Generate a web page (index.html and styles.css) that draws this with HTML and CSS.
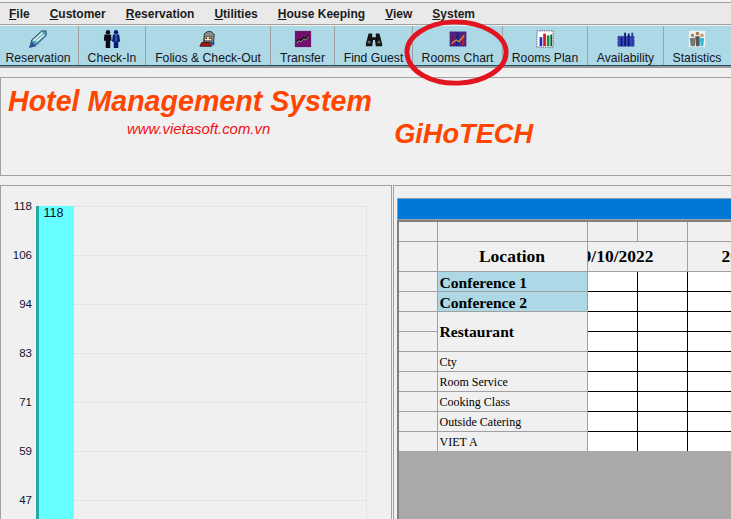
FILE: index.html
```html
<!DOCTYPE html>
<html lang="en">
<head>
<meta charset="utf-8">
<title>Hotel Management System</title>
<link rel="stylesheet" href="styles.css">
</head>
<body>
<div class="app">
  <nav class="menu">
    <span class="mi"><u>F</u>ile</span>
    <span class="mi"><u>C</u>ustomer</span>
    <span class="mi"><u>R</u>eservation</span>
    <span class="mi"><u>U</u>tilities</span>
    <span class="mi"><u>H</u>ouse Keeping</span>
    <span class="mi"><u>V</u>iew</span>
    <span class="mi"><u>S</u>ystem</span>
  </nav>
  <div class="toolbar">
    <div class="tb w78"><svg class="ic" viewBox="0 0 20 20"><path d="M1 19 L3 11 L14 1 L19 1 L19 6 L9 16 Z" fill="#4f9fb4" stroke="#1f4a78"/><path d="M5 12 L15 3 M8 13 L17 5" stroke="#e8f4f4" stroke-width="1.800"/><path d="M0 20 L8 18 L3 13 Z" fill="#2f4f96"/></svg><span>Reservation</span></div>
    <div class="tb w66"><svg class="ic" viewBox="0 0 20 20"><circle cx="5.500" cy="2.500" r="2.500" fill="#0b0b18"/><path d="M1.500 5 H9 L9.500 12 H8 V20 H3 V12 H1 Z" fill="#0b0b18"/><circle cx="14.500" cy="2.500" r="2.500" fill="#0a1c78"/><path d="M11 5 H18 L19 13 H17 L17 20 H12 L12 13 H10 Z" fill="#0a1c78"/><path d="M14.500 5 V13" stroke="#4fa0d8"/></svg><span>Check-In</span></div>
    <div class="tb w124"><svg class="ic" viewBox="0 0 20 20"><path d="M5 13 L6 4 Q10 0 14 2 L17 5 L16 14 Z" fill="#8a8a8a" stroke="#333"/><rect x="6" y="7" width="8" height="5" fill="#f4e4b0" stroke="#222" stroke-width=".6"/><circle cx="8" cy="9" r="1" fill="#111"/><circle cx="12" cy="9" r="1" fill="#111"/><path d="M1 18 L3 14 H12 L14 18 Z" fill="#b01818" stroke="#311"/><path d="M13 13 H17 V17 H14 Z" fill="#2c4a9a"/></svg><span>Folios &amp; Check-Out</span></div>
    <div class="tb w63"><svg class="ic" viewBox="0 0 20 20"><rect x="1" y="1" width="18" height="18" fill="#72106e"/><path d="M3 13 L6 11 L8 12 L11 9 L13 10 L17 6" stroke="#111" stroke-width="2.400" fill="none"/><path d="M3 14 L6 12 L8 13 L11 10 L13 11 L17 7" stroke="#ddd" stroke-width=".8" fill="none"/></svg><span>Transfer</span></div>
    <div class="tb w77"><svg class="ic" viewBox="0 0 20 20"><path d="M4 4 H8 V8 H12 V4 H16 L19 15 V18 H12 L11 11 H9 L8 18 H1 V15 Z" fill="#141414"/><rect x="3" y="12" width="3" height="3" fill="#666"/><rect x="14" y="12" width="3" height="3" fill="#666"/></svg><span>Find Guest</span></div>
    <div class="tb w90"><svg class="ic" viewBox="0 0 20 20"><rect x="1" y="2" width="18" height="16" fill="#5a2080" stroke="#18248a" stroke-dasharray="1 1"/><rect x="3" y="5" width="3" height="12" fill="#701858"/><rect x="8" y="3" width="3" height="14" fill="#18248a"/><rect x="14" y="6" width="3" height="11" fill="#a02040"/><path d="M3 15 L8 11 L11 13 L17 6" stroke="#e8a030" stroke-width="1.200" fill="none"/></svg><span>Rooms Chart</span></div>
    <div class="tb w85"><svg class="ic" viewBox="0 0 20 20"><rect x="1" y="1" width="18" height="18" fill="#fff" stroke="#334" stroke-dasharray="1 1"/><rect x="4" y="8" width="3" height="10" fill="#2828c8"/><rect x="8" y="4" width="3" height="14" fill="#d81828"/><rect x="12" y="6" width="3" height="12" fill="#109040"/><rect x="16" y="5" width="2" height="13" fill="#0a5a30"/></svg><span>Rooms Plan</span></div>
    <div class="tb w76"><svg class="ic" viewBox="0 0 20 20"><rect x="1" y="7" width="18" height="11" fill="#3a48c0" stroke="#18208a" stroke-dasharray="1 1"/><rect x="4" y="8" width="2" height="10" fill="#10186a"/><rect x="8" y="3" width="2" height="15" fill="#10186a"/><rect x="12" y="4" width="2" height="14" fill="#10186a"/><rect x="16" y="3" width="2" height="15" fill="#2a38b0"/></svg><span>Availability</span></div>
    <div class="tb w67"><svg class="ic" viewBox="0 0 20 20"><rect x="1" y="1" width="18" height="18" fill="#f4f4f4"/><circle cx="5" cy="6" r="2" fill="#b08868"/><path d="M2 9 H8 V18 H3 Z" fill="#777"/><circle cx="10.500" cy="4" r="2" fill="#a07858"/><path d="M8 7 H13 V18 H9 Z" fill="#555"/><circle cx="15.500" cy="6" r="2" fill="#c09878"/><path d="M13 9 H18 L17 18 H14 Z" fill="#38b8d8"/></svg><span>Statistics</span></div>
  </div>
  <div class="gap"></div>
  <header class="banner">
    <h1 class="title">Hotel Management System</h1>
    <div class="banner-row">
      <a class="site">www.vietasoft.com.vn</a>
      <strong class="brand">GiHoTECH</strong>
    </div>
  </header>
  <div class="split">
    <section class="chart-panel">
      <div class="chart">
        <div class="gl"><span class="yl">118</span><i></i></div>
        <div class="gl"><span class="yl">106</span><i></i></div>
        <div class="gl"><span class="yl">94</span><i></i></div>
        <div class="gl"><span class="yl">83</span><i></i></div>
        <div class="gl"><span class="yl">71</span><i></i></div>
        <div class="gl"><span class="yl">59</span><i></i></div>
        <div class="gl"><span class="yl">47</span><i></i></div>
        <div class="bar">118</div>
      </div>
    </section>
    <section class="grid-panel">
      <div class="bluebar"></div>
      <div class="sheet">
        <table class="tbl">
          <colgroup><col class="c1"><col class="c2"><col class="c3"><col class="c3"><col class="c3"><col class="c3"></colgroup>
          <tr class="r19 head"><td></td><td></td><td></td><td></td><td></td><td></td></tr>
          <tr class="r30 head"><td></td><td class="loc">Location</td><td colspan="2"><div class="date d1"><span>19/10/2022</span></div></td><td colspan="2"><div class="date d2"><span>20/10/2022</span></div></td></tr>
          <tr class="r20"><td class="hd"></td><td class="hd blue">Conference 1</td><td></td><td></td><td></td><td></td></tr>
          <tr class="r20"><td class="hd"></td><td class="hd blue">Conference 2</td><td></td><td></td><td></td><td></td></tr>
          <tr class="r20"><td class="hd"></td><td class="hd big" rowspan="2">Restaurant</td><td></td><td></td><td></td><td></td></tr>
          <tr class="r20"><td class="hd"></td><td></td><td></td><td></td><td></td></tr>
          <tr class="r20"><td class="hd"></td><td class="hd sm">Cty</td><td></td><td></td><td></td><td></td></tr>
          <tr class="r20"><td class="hd"></td><td class="hd sm">Room Service</td><td></td><td></td><td></td><td></td></tr>
          <tr class="r20"><td class="hd"></td><td class="hd sm">Cooking Class</td><td></td><td></td><td></td><td></td></tr>
          <tr class="r20"><td class="hd"></td><td class="hd sm">Outside Catering</td><td></td><td></td><td></td><td></td></tr>
          <tr class="r20"><td class="hd"></td><td class="hd sm">VIET A</td><td></td><td></td><td></td><td></td></tr>
        </table>
      </div>
    </section>
  </div>
  <svg class="circle" viewBox="0 0 110 70" aria-hidden="true"><path d="M50 3 C78 2 104 16 105 33 C106 52 82 65 56 66 C28 67 4 54 3 35 C2 18 24 4 50 3 Z" fill="none" stroke="#e2141f" stroke-width="5"/></svg>
</div>
</body>
</html>
```
FILE: styles.css
```css
* { box-sizing: border-box; }
html, body { margin: 0; padding: 0; }
body { background: #f0f0f0; font-family: "Liberation Sans", Arial, sans-serif; overflow: hidden; }
.app { position: relative; width: 731px; height: 519px; overflow: hidden; display: flex; flex-direction: column; }

.menu { flex: none; height: 23px; margin-top: 2px; padding: 0 0 0 9px; background: #e9e9e9; border-top: 1px solid #a0a0a0; border-bottom: 1px solid #a0a0a0; display: flex; gap: 20px; align-items: center; font-size: 12px; font-weight: bold; color: #1c1c1c; }
.mi u { text-decoration: underline; }

.toolbar { flex: none; height: 40px; margin-top: 1px; background: #add8e6; border-bottom: 1px solid #24505f; display: flex; overflow: hidden; }
.tb { flex: none; height: 39px; border-right: 1px solid #a0a0a0; display: flex; flex-direction: column; align-items: center; padding-top: 4px; font-size: 12.200px; color: #141420; }
.tb span { margin-top: 2px; line-height: 16px; white-space: nowrap; }
.ic { width: 18px; height: 18px; flex: none; display: block; }
.w78 { width: 79px; padding-right: 2px; }
.w66 { width: 67px; }
.w124 { width: 125px; }
.w63 { width: 64px; }
.w77 { width: 78px; }
.w90 { width: 90px; }
.w85 { width: 85px; }
.w76 { width: 76px; }
.w67 { width: 68px; border-right: none; padding-right: 2px; }

.gap { flex: none; height: 11px; border-top: 2px solid #9a9a9a; }

.banner { flex: none; height: 99px; margin-bottom: 9px; border: 1px solid #a0a0a0; border-right: none; padding: 7px 0 0 7px; }
.title { margin: 0; font-size: 28.600px; line-height: 33px; font-weight: bold; font-style: italic; color: #ff4500; white-space: nowrap; }
.banner-row { display: flex; align-items: flex-start; }
.site { margin: 2px 0 0 119px; font-size: 14.900px; line-height: 18px; font-style: italic; color: #f01010; white-space: nowrap; }
.brand { margin: 0 0 0 124px; font-size: 27.200px; line-height: 32px; font-style: italic; color: #ff4500; white-space: nowrap; }

.split { flex: 1; min-height: 0; display: flex; gap: 1px; }
.chart-panel { flex: none; width: 392px; border: 1px solid #a0a0a0; border-bottom: none; }
.chart { position: relative; padding-top: 20px; }
.gl { height: 49px; display: flex; align-items: flex-start; width: 366px; border-right: 1px solid #e4e4e4; }
.yl { flex: none; width: 31px; margin-top: -7px; text-align: right; font-size: 11.500px; line-height: 14px; color: #121230; }
.gl i { flex: 1; margin-left: 4px; height: 1px; background: #e4e4e4; }
.bar { position: absolute; left: 35px; top: 20px; width: 38px; height: 400px; background: #66ffff; border-left: 3px solid #27a9a9; text-align: center; font-size: 12.500px; line-height: 14px; color: #101030; padding-right: 6px; }

.grid-panel { flex: 1; min-width: 0; border: 1px solid #a0a0a0; border-right: none; border-bottom: none; padding: 12px 0 0 3px; display: flex; flex-direction: column; overflow: hidden; }
.bluebar { flex: none; height: 22px; background: #0078d7; border-top: 1px solid #8a9aa8; border-left: 1px solid #8a9aa8; border-bottom: 1px solid #a0a0a0; }
.sheet { flex: 1; min-height: 0; background: #a9a9a9; border-left: 2px solid #808080; border-top: 2px solid #808080; overflow: hidden; }
.tbl { table-layout: fixed; border-collapse: collapse; width: 388px; font-family: "Liberation Serif", "Times New Roman", serif; color: #000; }
.c1 { width: 38px; }
.c2 { width: 150px; }
.c3 { width: 50px; }
.tbl td { padding: 0; border: 1px solid #000; background: #fff; overflow: hidden; white-space: nowrap; }
.tbl tr:first-child td { border-top: none; }
.tbl td:first-child { border-left: none; }
.tbl tr:last-child td { border-bottom: none; }
.r19 { height: 19px; }
.r20 { height: 20px; }
.r30 { height: 30px; }
.tbl .head td, .tbl td.hd { background: #f0f0f0; border-color: #a0a0a0; }
.tbl td.hd { padding-left: 2px; }
.tbl td.blue { background: #add8e6; padding-top: 2px; line-height: 17px; }
.tbl td.big { padding-top: 2px; }
.tbl td.sm { padding-top: 2px; line-height: 16px; }
.tbl td.hd:first-child { padding: 0; }
.tbl .loc { text-align: center; font-size: 17.500px; font-weight: bold; }
.date { display: flex; height: 29px; align-items: center; overflow: hidden; font-size: 17.500px; font-weight: bold; }
.date span { flex: none; }
.d1 { justify-content: flex-end; padding-right: 33px; }
.d2 { padding-left: 34px; }
.tbl td.blue, .tbl td.big { font-size: 15.600px; font-weight: bold; }
.tbl td.sm { font-size: 12px; }

.circle { position: absolute; left: 404px; top: 19px; width: 107px; height: 68px; pointer-events: none; }
```
